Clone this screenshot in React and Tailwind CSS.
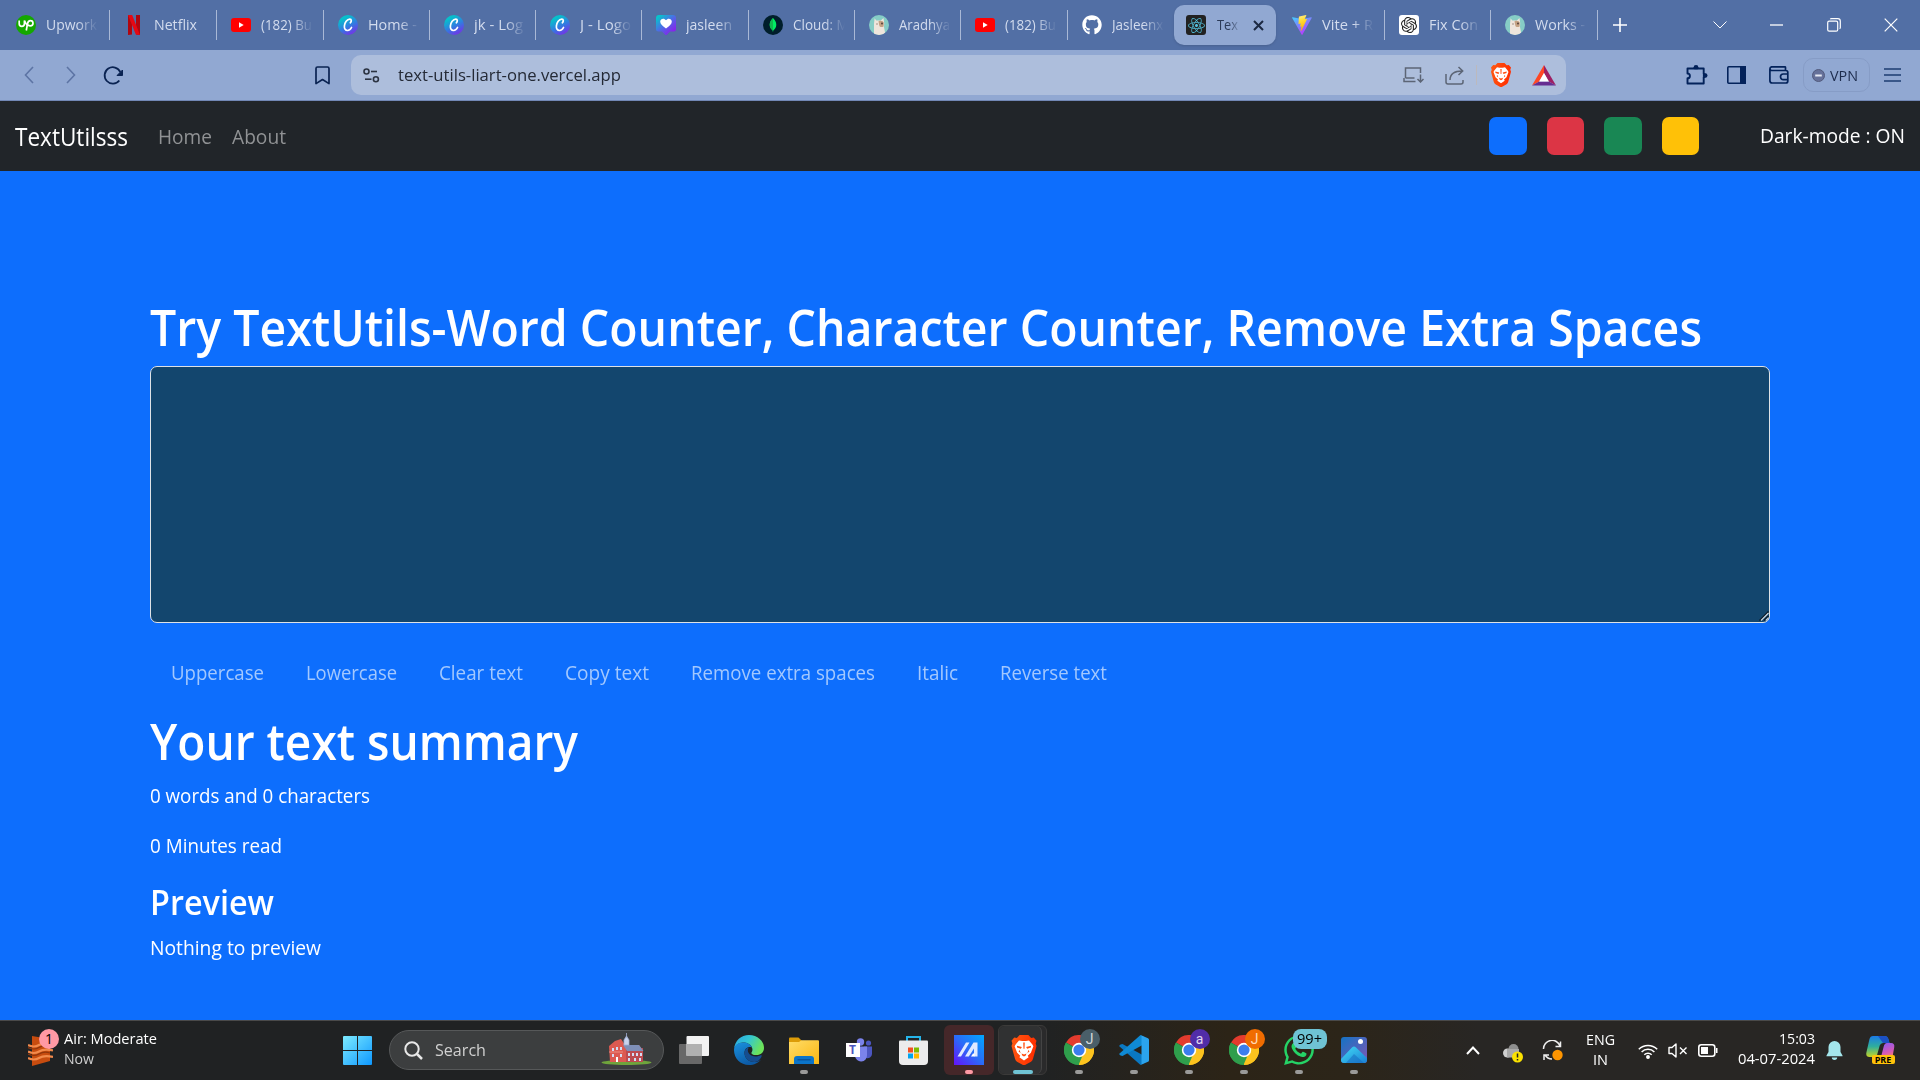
import React, { useLayoutEffect, useRef } from "react";
import { FaGithub, FaWhatsapp, FaReact } from "react-icons/fa";
import { SiOpenai } from "react-icons/si";

/* Single-line label set to a fixed advance width (w) or a fixed condensing factor (k). */
function T({ w, k, className = "", children }) {
  const outer = useRef(null);
  const inner = useRef(null);
  useLayoutEffect(() => {
    const el = inner.current;
    el.style.transform = "none";
    const natural = el.getBoundingClientRect().width;
    const scale = w ? w / natural : k || 0.93;
    el.style.transform = `scaleX(${scale})`;
    outer.current.style.width = `${natural * scale}px`;
  }, [w, k]);
  return (
    <span ref={outer} className={`inline-block whitespace-pre ${className}`}>
      <span ref={inner} className="inline-block origin-left">
        {children}
      </span>
    </span>
  );
}

const Canva = ({ id }) => (
  <svg width="20" height="20" viewBox="0 0 20 20">
    <defs>
      <linearGradient id={id} x1="0.2" y1="0" x2="0.75" y2="1">
        <stop offset="0.15" stopColor="#06c1cb" />
        <stop offset="0.55" stopColor="#2f7fe0" />
        <stop offset="1" stopColor="#7a2be8" />
      </linearGradient>
    </defs>
    <circle cx="10" cy="10" r="10" fill={`url(#${id})`} />
    <path d="M12.300 7.800c1.300-1.100 1.500-3.700-.5-3.700C9 4.100 6.700 7.700 6.400 10.800c-.3 3 1.100 4.800 3.100 4.700 1.700-.1 3.200-1.300 4-3" fill="none" stroke="#fff" strokeWidth="1.700" strokeLinecap="round" />
  </svg>
);

const YouTube = () => (
  <svg width="20" height="20" viewBox="0 0 20 20">
    <rect x="0" y="3" width="20" height="14" rx="3" fill="#f00" />
    <path d="M8 7.200 12.700 10 8 12.800z" fill="#fff" />
  </svg>
);

const Upwork = () => (
  <span className="flex h-5 w-5 items-center justify-center rounded-full bg-[#14a800]">
    <svg width="16" height="12" viewBox="0 0 16 12" fill="none" stroke="#fff" strokeWidth="1.700">
      <path d="M1.200 1.500v3.300a2.600 2.600 0 0 0 5.200 0V1.500C7.300 4 8.600 5.800 10 6.700" />
      <path d="M8.300 11.500 9.400 5.200C9.800 3 10.900 1.700 12.400 1.700a2.500 2.500 0 0 1 0 5.200c-1 0-1.900-.4-2.600-1" />
    </svg>
  </span>
);

const NetflixIcon = () => (
  <svg width="20" height="20" viewBox="0 0 20 20">
    <path d="M4 0h4v19.500L4 20zM12 0h4v20l-4-.5z" fill="#b1060f" />
    <path d="M4 0h4.200L16 20l-4.200-.5z" fill="#e50914" />
  </svg>
);

const HeartPin = () => (
  <svg width="20" height="20" viewBox="0 0 20 20">
    <defs>
      <linearGradient id="hp" x1="0" y1="0" x2="0.9" y2="1">
        <stop offset="0.1" stopColor="#06c5cc" />
        <stop offset="0.5" stopColor="#4d6be6" />
        <stop offset="0.9" stopColor="#8a20ec" />
      </linearGradient>
    </defs>
    <path d="M3 0h14a3 3 0 0 1 3 3v11a2.500 2.500 0 0 1-2.500 2.500H14L11 19.600a1.300 1.300 0 0 1-2 0L6 16.500H2.500A2.500 2.500 0 0 1 0 14V3a3 3 0 0 1 3-3z" fill="url(#hp)" />
    <path d="M10 13.500C6 10.800 4.200 9 4.200 6.600c0-3 4-4.200 5.800-1.300 1.800-2.900 5.800-1.700 5.800 1.300 0 2.400-1.800 4.200-5.800 6.900z" fill="#fff" />
  </svg>
);

const Mongo = () => (
  <svg width="20" height="20" viewBox="0 0 20 20">
    <circle cx="10" cy="10" r="10" fill="#001e2b" />
    <path d="M10 3c1.800 2 3.300 4 3.300 6.800 0 2.600-1.300 4.400-2.900 5.500L10 17l-.4-1.700C8 14.200 6.700 12.400 6.700 9.800 6.700 7 8.200 5 10 3z" fill="#00ed64" />
    <path d="M10 3v14l-.4-1.700C8 14.200 6.700 12.400 6.700 9.800 6.700 7 8.200 5 10 3z" fill="#10b850" />
  </svg>
);

const Llama = () => (
  <svg width="20" height="20" viewBox="0 0 20 20">
    <defs>
      <clipPath id="llc"><circle cx="10" cy="10" r="10" /></clipPath>
    </defs>
    <g clipPath="url(#llc)">
      <rect width="20" height="20" fill="#86cdc6" />
      <path d="M5 20V9l.6-5.800L7.300 5.500h4.500L14.500 3l.7 5-.2 4 1.500 8z" fill="#efe5dc" />
      <path d="M9.500 6.200c2-.8 5-.3 5.300 1.800l-.2 3.500c-2 1.200-4 .5-4.300-1z" fill="#c5a283" />
      <circle cx="13" cy="8.500" r=".9" fill="#4c3a35" />
      <circle cx="8" cy="9" r=".7" fill="#8b7468" />
    </g>
  </svg>
);

const ReactBadge = () => (
  <span className="flex h-5 w-5 items-center justify-center rounded-[3px] bg-[#222]">
    <FaReact size={17} color="#53c1de" />
  </span>
);

const Vite = () => (
  <svg width="20" height="20" viewBox="0 0 20 20">
    <defs>
      <linearGradient id="vt1" x1="0" y1="0" x2="0.6" y2="1">
        <stop stopColor="#41d1ff" />
        <stop offset="1" stopColor="#bd34fe" />
      </linearGradient>
      <linearGradient id="vt2" x1="0.4" y1="0" x2="0.6" y2="1">
        <stop stopColor="#ffea83" />
        <stop offset="0.3" stopColor="#ffdd35" />
        <stop offset="1" stopColor="#ffa800" />
      </linearGradient>
    </defs>
    <path d="m19.700 3.100-9.200 16.500a.5.500 0 0 1-.9 0L.2 3.100a.5.500 0 0 1 .5-.8l9.300 1.700 9.200-1.700c.4 0 .7.400.5.800z" fill="url(#vt1)" />
    <path d="m14 .1-6.800 1.300-.3.300-.4 7c0 .2.100.3.300.3l1.900-.4-.6 2.800c0 .2.100.4.300.3l1.200-.4-.9 4.400c0 .3.300.4.500.2l5.800-11.600c.1-.2-.1-.4-.3-.4l-2 .4L14.300.4c0-.2-.1-.3-.3-.3z" fill="url(#vt2)" />
  </svg>
);

const Gpt = () => (
  <span className="flex h-5 w-5 items-center justify-center rounded-[3px] bg-white">
    <SiOpenai size={16} color="#222" />
  </span>
);

const Brave = ({ size = 24, id }) => (
  <svg width={size} height={size} viewBox="0 0 24 24">
    <defs>
      <linearGradient id={id} x1="0" y1="0" x2="1" y2="0.2">
        <stop stopColor="#ff5a12" />
        <stop offset="1" stopColor="#ff2f00" />
      </linearGradient>
    </defs>
    <path d="M8.500 0h7l2.200 2.300 2.100-.3L22 4.600l-.7 2.200.7 2-2.800 10.200c-.3 1-.8 1.700-1.600 2.300L12.800 24h-1.600l-4.800-2.700c-.8-.6-1.300-1.300-1.600-2.300L2 8.800l.7-2L2 4.600 4.200 2l2.100.3z" fill={`url(#${id})`} />
    <path d="m8 4.300 2.500.5h3L16 4.300l2.700 3.200.8 1.500-2 5.200-2.500 2.300.7 1.300L12 20.300l-3.700-2.500.7-1.300-2.500-2.300L4.500 9l.8-1.500z" fill="#fff" />
    <path d="m6.300 8.600 4 .9-.8 1.500-3-1zM17.700 8.600l-4 .9.800 1.500 3-1zM10 14.800l2 .7 2-.7-.6 1.600-1.400.8-1.400-.8zM11.400 6h1.200l-.2 5h-.8zM8.500 12l.8 2.500-1.700-1.600zM15.500 12l-.8 2.500 1.700-1.600z" fill="#ff4a0c" />
  </svg>
);

const Bat = () => (
  <svg width="24" height="21" viewBox="0 0 24 21">
    <path d="M12 0 0 20.500l7.200-4L12 8z" fill="#ff4724" />
    <path d="m12 0 12 20.500-7.200-4L12 8z" fill="#9e1f63" />
    <path d="M0 20.500h24l-7.200-4H7.200z" fill="#662d91" />
    <path d="m12 8-4.900 8.500h9.800z" fill="#fff" />
  </svg>
);

const TABS = [
  { w: "w-[110px] pl-4", sep: true, icon: <Upwork />, text: "Upwork", tw: 51 },
  { w: "w-[107px] pl-3.5", sep: true, icon: <NetflixIcon />, text: "Netflix", tw: 43, solid: true },
  { w: "w-[107px] pl-3.5", sep: true, icon: <YouTube />, text: "(182) Bu", tw: 51 },
  { w: "w-[106px] pl-3.5", sep: true, icon: <Canva id="cv1" />, text: "Home -", tw: 49 },
  { w: "w-[106px] pl-3.5", sep: true, icon: <Canva id="cv2" />, text: "jk - Log", tw: 49 },
  { w: "w-[106px] pl-3.5", sep: true, icon: <Canva id="cv3" />, text: "J - Logo", tw: 51 },
  { w: "w-[107px] pl-3.5", sep: true, icon: <HeartPin />, text: "jasleen", tw: 46 },
  { w: "w-[106px] pl-3.5", sep: true, icon: <Mongo />, text: "Cloud: M" },
  { w: "w-[106px] pl-3.5", sep: true, icon: <Llama />, text: "Aradhya", tw: 51 },
  { w: "w-[107px] pl-3.5", sep: true, icon: <YouTube />, text: "(182) Bu", tw: 51 },
  { w: "w-[106px] pl-3.5", icon: <FaGithub size={20} color="#fff" />, text: "Jasleenx" },
  { active: true },
  { w: "w-[107px] pl-3.5", sep: true, icon: <Vite />, text: "Vite + R", tw: 51 },
  { w: "w-[106px] pl-3.5", sep: true, icon: <Gpt />, text: "Fix Con", tw: 49 },
  { w: "w-[107px] pl-3.5", sep: true, icon: <Llama />, text: "Works -", tw: 50 },
];

function TabStrip() {
  return (
    <div className="flex h-[50px] items-center bg-[#526fa5] text-[14.5px] text-[#d3dcee]">
      {TABS.map((t, i) =>
        t.active ? (
          <div key={i} className="mr-0.5 flex h-10 w-[102px] shrink-0 items-center rounded-[10px] bg-[#91a8d2] pl-3 shadow-sm">
            <ReactBadge />
            <div className="ml-[11px] w-[22px] overflow-hidden text-[#2b3a57] [mask-image:linear-gradient(to_right,black_50%,rgba(0,0,0,0.2))]">
              <T w={21}>Tex</T>
            </div>
            <svg className="ml-3.5" width="11" height="11" viewBox="0 0 11 11">
              <path d="M1 1l9 9M10 1l-9 9" stroke="#1c2942" strokeWidth="2" />
            </svg>
          </div>
        ) : (
          <div key={i} className={`flex h-[30px] shrink-0 items-center ${t.w} ${t.sep ? "border-r border-[#a9b8d6]" : ""}`}>
            <span className="shrink-0">{t.icon}</span>
            <div className={`ml-2.5 w-[52px] shrink-0 overflow-hidden ${t.solid ? "" : "[mask-image:linear-gradient(to_right,black_60%,transparent)]"}`}>
              <T w={t.tw}>{t.text}</T>
            </div>
          </div>
        )
      )}
      <svg className="ml-[15px]" width="14" height="14" viewBox="0 0 14 14"><path d="M7 0v14M0 7h14" stroke="#fff" strokeWidth="1.6" /></svg>
      <div className="ml-auto flex items-center">
        <div className="flex w-[57px] justify-center"><svg width="14" height="8" viewBox="0 0 14 8"><path d="m.5.5 6.500 6.500 6.500-6.500" fill="none" stroke="#fff" strokeWidth="1" /></svg></div>
        <div className="flex w-[57px] justify-center"><svg width="13" height="2" viewBox="0 0 13 2"><path d="M0 1h13" stroke="#fff" strokeWidth="1.300" /></svg></div>
        <div className="flex w-[57px] justify-center"><svg width="14" height="14" viewBox="0 0 14 14" fill="none" stroke="#fff" strokeWidth="1.200"><rect x=".7" y="3.200" width="10" height="10" rx="1.500" /><path d="M3.300 1.300Q3.600.7 4.500.7h6.300q2.500 0 2.500 2.500v6.300q0 .8-.7 1.200" /></svg></div>
        <div className="flex w-[58px] justify-center"><svg width="14" height="14" viewBox="0 0 14 14"><path d="m.7.7 12.600 12.600M13.300.7.7 13.300" stroke="#fff" strokeWidth="1.200" /></svg></div>
      </div>
    </div>
  );
}

function Toolbar() {
  const slot = "flex w-[42px] shrink-0 justify-center";
  return (
    <div className="flex h-[51px] items-center border-b border-[#7288b5] bg-[#91a8d2] pl-2">
      <div className={slot}><svg width="10" height="18" viewBox="0 0 10 18"><path d="M9 1 1.500 9 9 17" fill="none" stroke="#5d74a4" strokeWidth="1.600" /></svg></div>
      <div className={slot}><svg width="10" height="18" viewBox="0 0 10 18"><path d="m1 1 7.500 8L1 17" fill="none" stroke="#5d74a4" strokeWidth="1.600" /></svg></div>
      <div className={slot}>
        <svg width="20" height="20" viewBox="0 0 20 20" fill="none">
          <path d="M16.300 15.500A8.200 8.200 0 1 1 17.300 7" stroke="#0a2352" strokeWidth="1.800" />
          <path d="M19.500 5v5.500h-5.500z" fill="#0a2352" stroke="#0a2352" strokeLinejoin="round" />
        </svg>
      </div>
      <div className="ml-[168px] flex w-10 justify-center"><svg width="15" height="19" viewBox="0 0 15 19"><path d="M1 2.500Q1 1 2.500 1h10Q14 1 14 2.500V17.600L7.500 13.500 1 17.600z" fill="none" stroke="#0a2352" strokeWidth="1.700" strokeLinejoin="round" /></svg></div>
      <div className="ml-[9px] flex h-10 w-[1215px] items-center rounded-[10px] bg-[#adbedc] pl-3 pr-px">
        <svg width="17" height="15" viewBox="0 0 17 15" fill="none" stroke="#2b3342" strokeWidth="1.600">
          <circle cx="3.500" cy="3.500" r="2.500" /><path d="M8 3.500h6" /><circle cx="12.900" cy="11.200" r="2.500" /><path d="M2 11.200h6.500" />
        </svg>
        <div className="ml-[18px] pb-px text-[17px] text-[#242a36]"><T w={223}>text-utils-liart-one.vercel.app</T></div>
        <div className="ml-auto flex items-center">
          <div className={slot}>
            <svg width="21" height="16" viewBox="0 0 21 16" fill="none" stroke="#5c6575" strokeWidth="1.500">
              <path d="M2.500 11V1h15v5M2.500 11h9M1 11v3.500h11.500M17.500 7.500v7M14.500 12l3 3 3-3" />
            </svg>
          </div>
          <div className="flex w-[42px] justify-center">
            <svg width="20" height="19" viewBox="0 0 20 19" fill="none" stroke="#5c6575" strokeWidth="1.500">
              <path d="M1 8v8q0 2 2 2h13q2 0 2-2v-2M5 14C5 8.500 9 5 17.500 5M13.500 1l4.200 4-4.200 4" />
            </svg>
          </div>
          <div className="h-5 w-px bg-[#bcb9bd]" />
          <div className="flex w-[46px] justify-center pl-0.5"><Brave size={24} id="br1" /></div>
          <div className="flex w-[42px] justify-center"><Bat /></div>
        </div>
      </div>
      <div className="ml-[109px] flex w-[42px] justify-center pb-px pl-0.5">
        <svg width="22" height="20" viewBox="0 0 22 20">
          <path d="M1.500 3.500h6.800V3h3.400v.5h6V9h.8v3h-.8v6.500H1.500v-5.200c3.200 0 3.200-4.800 0-4.800z" fill="none" stroke="#03225a" strokeWidth="1.900" strokeLinejoin="round" />
          <circle cx="10" cy="2.400" r="2.400" fill="#03225a" /><circle cx="19.200" cy="10.500" r="2.300" fill="#03225a" />
        </svg>
      </div>
      <div className="flex w-10 justify-center pr-0.5"><svg width="19" height="18" viewBox="0 0 19 18"><rect x=".8" y=".8" width="17.400" height="16.400" rx="1" fill="none" stroke="#03225a" strokeWidth="1.600" /><path d="M13 0h6v18h-6z" fill="#03225a" /></svg></div>
      <div className="ml-px flex w-[42px] justify-center">
        <svg width="20" height="18" viewBox="0 0 20 18" fill="none" stroke="#03225a" strokeWidth="1.700">
          <path d="M16.500 4.500V1.500q0-.7-.7-.7H3Q.9.8.9 3v11.500q0 2.500 2.300 2.500h13.600q2 0 2-2V6.500q0-2-2-2H3Q.9 4.500.9 2.800M18.800 8h-4.500a2.800 2.800 0 0 0 0 5.600h4.500" />
        </svg>
      </div>
      <div className="ml-[3px] flex h-[34px] w-[67px] items-center rounded-[10px] border border-[#869cc6] pl-2 text-[15px] text-[#1c2b4c]">
        <svg width="13" height="13" viewBox="0 0 13 13"><circle cx="6.500" cy="6.500" r="6" fill="#66719a" stroke="#525a7c" /><path d="M3.200 6.500h6.600" stroke="#e6eaf4" strokeWidth="2" /></svg>
        <T w={28} className="ml-[5px]">VPN</T>
      </div>
      <div className="flex w-[46px] justify-center pr-0.5"><svg width="17" height="14" viewBox="0 0 17 14"><path d="M0 1h17M0 7h17M0 13h17" stroke="#1d3c72" strokeWidth="1.700" /></svg></div>
    </div>
  );
}

function Navbar() {
  return (
    <nav className="flex h-[70px] items-center bg-[#212529] px-[15px] text-[20px] text-white">
      <T w={113} className="pt-px text-[25px]">TextUtilsss</T>
      <T w={54} className="ml-[30px] pt-0.5 text-[#909294]">Home</T>
      <T w={54} className="ml-5 pt-0.5 text-[#909294]">About</T>
      <div className="ml-auto flex gap-5">
        <div className="h-[38px] w-[37.5px] rounded-[7px] bg-[#0d6efd]" />
        <div className="h-[38px] w-[37.5px] rounded-[7px] bg-[#dc3545]" />
        <div className="h-[38px] w-[37.5px] rounded-[7px] bg-[#198754]" />
        <div className="h-[38px] w-[37.5px] rounded-[7px] bg-[#ffc107]" />
      </div>
      <T w={145} className="ml-[61px]">Dark-mode : ON</T>
    </nav>
  );
}

function Main() {
  return (
    <main className="flex h-[849px] flex-col bg-[#0d6efd] px-[150px] pt-[126px] text-[20px] leading-[30px] text-white">
      <h1 className="h-[60px] text-[50px] leading-[60px] font-semibold"><T w={1552}>Try TextUtils-Word Counter, Character Counter, Remove Extra Spaces</T></h1>
      <div className="relative mt-[9px] h-[257px] w-[1620px] shrink-0">
        <textarea className="block h-full w-full resize-none rounded-[7px] border border-[#dee2e6] bg-[#13466e] outline-none" />
        <svg className="absolute right-px bottom-0.5" width="11" height="11" viewBox="0 0 11 11" strokeWidth="1.300">
          <path d="M1.500 10.500 10.500 1.500M6 10.500 10.500 6" stroke="#0a1520" /><path d="M3 10.500 10.500 3M7.800 10.500 10.500 7.800" stroke="#c5d0da" />
        </svg>
      </div>
      <div className="mt-[35px] flex h-[30px] gap-[42px] pl-[21px] text-[#a3c8fe]">
        <T w={93}>Uppercase</T>
        <T w={91}>Lowercase</T>
        <T w={84}>Clear text</T>
        <T w={84}>Copy text</T>
        <T w={184}>Remove extra spaces</T>
        <T w={41}>Italic</T>
        <T w={107}>Reverse text</T>
      </div>
      <h1 className="mt-[23px] h-[60px] text-[50px] leading-[60px] font-semibold"><T w={428}>Your text summary</T></h1>
      <p className="mt-2.5 h-[30px]"><T w={220}>0 words and 0 characters</T></p>
      <p className="mt-5 h-[30px]"><T w={132}>0 Minutes read</T></p>
      <h2 className="mt-5 h-[42px] text-[35px] leading-[42px] font-semibold"><T w={124}>Preview</T></h2>
      <p className="mt-2.5 h-[30px]"><T w={171}>Nothing to preview</T></p>
    </main>
  );
}

const Building = () => (
  <svg width="51" height="32" viewBox="0 0 51 32">
    <ellipse cx="25.500" cy="29.500" rx="25" ry="2.500" fill="#6fa43c" />
    <path d="M8 13 14 8l6-2 4 6h14l4 6v11H9z" fill="#dc5a52" />
    <path d="M25 15h17v14H25z" fill="#bd4a50" />
    <path d="M22 12h16l4.500 6H26z" fill="#7e8fb8" />
    <path d="M25.500 0v5M23 12V7l2.500-4L28 7v5z" fill="#c9d3ee" stroke="#a3b0d4" strokeWidth=".8" />
    <path d="M11 15h2v3h-2zM15 14h2v3h-2zM19 14h2v3h-2zM11 21h2v3h-2zM19 21h2v3h-2zM27 20h2v3h-2zM31 20h2v3h-2zM35 20h2v3h-2zM39 20h2v3h-2zM27 25h2v3h-2zM33 25h2v3h-2zM38 25h2v3h-2z" fill="#d3dcf4" />
    <path d="M15 24h2v5h-2z" fill="#fff" />
    <path d="M8 19h14" stroke="#f19a8d" strokeWidth=".8" />
  </svg>
);

const Chrome = () => (
  <svg width="30" height="30" viewBox="0 0 30 30">
    <path d="M15 15 2 7.500A15 15 0 0 1 28 7.500z" fill="#e33b2e" />
    <path d="M15 15 28 7.500A15 15 0 0 1 15 30z" fill="#fcc31e" />
    <path d="M15 15V30A15 15 0 0 1 2 7.500z" fill="#2f9e4c" />
    <path d="M15 8h13.300A15 15 0 0 1 15 30l6.300-11.500z" fill="#fcc31e" />
    <path d="M2 7.500 8.700 18.700 15 22l3.200-.5L14.500 30A15 15 0 0 1 2 7.500z" fill="#2f9e4c" />
    <circle cx="15" cy="15" r="7.200" fill="#fff" /><circle cx="15" cy="15" r="5.600" fill="#3b7ded" />
  </svg>
);

const ChromeProfile = ({ bg, letter }) => (
  <span className="relative">
    <Chrome />
    <span className={`absolute -top-1.5 left-4 flex size-5 items-center justify-center rounded-full font-[Roboto,sans-serif] text-[14px] leading-none ${bg}`}>{letter}</span>
  </span>
);

const Edge = () => (
  <svg width="30" height="30" viewBox="0 0 30 30">
    <defs>
      <linearGradient id="ed1" x1="0" y1="0" x2="1" y2="0.4"><stop stopColor="#2aa5e4" /><stop offset=".5" stopColor="#33c6d3" /><stop offset="1" stopColor="#6ce35a" /></linearGradient>
      <linearGradient id="ed2" x1="0" y1="0" x2="0.5" y2="1"><stop stopColor="#1a92df" /><stop offset="1" stopColor="#0c59a4" /></linearGradient>
    </defs>
    <path d="M0 14C1 5.500 7 0 15 0c8.500 0 15 6 15 13 0 4.500-3.500 7-7.500 7-3.500 0-5.500-1.200-5-2.600.7-1.200 1.200-2 .8-4C17.500 9.500 13 7.500 9 7.500c-4.500 0-8 3-9 6.500z" fill="url(#ed1)" />
    <path d="M0 15c0-4.500 4-7.500 9-7.500 4.500 0 8 2 9 5-4-1.500-7.500 1-7.500 5.500 0 5 4.500 9.500 10.500 9 2.500-.2 4.500-1.200 6-2.500C24.500 28 20 30 15 30 6.500 30 0 23.500 0 15z" fill="url(#ed2)" />
    <path d="M10.500 18c0-3 1.500-5.200 4.500-5.500-1.500 1.500-1.700 4 .1 6.300 2.700 3.200 8.400 3.500 11.900 1.200 1 0 .8 1.500 0 2.700-1.500 2.300-3.500 4-6 4.300-6 .5-10.500-4-10.500-9z" fill="#154d8f" />
  </svg>
);

const Explorer = () => (
  <svg width="30" height="27" viewBox="0 0 30 27">
    <defs><linearGradient id="ex" x1="0" y1="0" x2="1" y2="1"><stop stopColor="#ffdc68" /><stop offset="1" stopColor="#fab711" /></linearGradient></defs>
    <path d="M0 1.500Q0 .5 1 .5h8.500L13 4v5H0z" fill="#dc9c08" />
    <path d="M0 5h10l2.500-1.800H29q1 0 1 1V27H0z" fill="url(#ex)" />
    <path d="M5 27v-5q0-3 3-3h14q3 0 3 3v5z" fill="#0b74c8" /><path d="M8.500 22.800h13" stroke="#084e93" strokeWidth="1.200" />
  </svg>
);

const Teams = () => (
  <span className="relative mt-[-1px]">
    <svg width="26" height="24" viewBox="0 0 26 24">
      <circle cx="22.500" cy="5" r="2.600" fill="#4c56c0" /><path d="M18 8.500h8V16a4.500 4.500 0 0 1-6 4z" fill="#4c56c0" />
      <circle cx="14.500" cy="4" r="3.700" fill="#7b83eb" /><path d="M9 8.500h12V17a6 6 0 0 1-12 1z" fill="#7b83eb" />
      <path d="M0 5h14v14H0z" fill="#fff" />
    </svg>
    <span className="absolute top-[5px] left-0 w-3.5 text-center text-[12px] leading-[14px] font-bold text-[#4c56c0]">T</span>
  </span>
);

const Store = () => (
  <svg width="29" height="29" viewBox="0 0 29 29">
    <path d="M8 7V1h13v6" fill="none" stroke="#25b5ea" strokeWidth="2" />
    <path d="M0 5.500Q0 4.500 1 4.500h27q1 0 1 1V25q0 4-4 4H4q-4 0-4-4z" fill="#ececec" />
    <path d="M9 11.500h5v5H9z" fill="#f25022" /><path d="M15 11.500h5v5h-5z" fill="#7fba00" />
    <path d="M9 17.500h5v5H9z" fill="#00a4ef" /><path d="M15 17.500h5v5h-5z" fill="#ffb900" />
  </svg>
);

const Armoury = () => (
  <svg width="30" height="30" viewBox="0 0 30 30">
    <defs><linearGradient id="ar" x1="0" y1="1" x2="1" y2="0"><stop stopColor="#6512fa" /><stop offset=".5" stopColor="#2a6bf8" /><stop offset="1" stopColor="#00a8ff" /></linearGradient></defs>
    <path d="M0 0h30v30H0z" fill="url(#ar)" />
    <path d="M3.500 21.500 12 7.500h3.500L7 21.500zM11 21.500l8.500-14h4v14H20v-8l-5.200 8z" fill="#dfe9ff" />
    <path d="M17 21.500l2-3h1.500v3z" fill="#fff" />
  </svg>
);

const VSCode = () => (
  <svg width="30" height="30" viewBox="0 0 30 30">
    <path d="M1.500 9.500 0 11l21.500 19 3-1.500v-8L3.500 9z" fill="#0a78c2" />
    <path d="M1.500 20.500 0 19 21.500 0l3 1.500v8L3.500 21z" fill="#0f8ad4" />
    <path d="M21.500 0 29 3.300q1 .5 1 1.500v20.400q0 1-1 1.500L21.500 30q1 0 1-1.200V1.200Q22.500 0 21.500 0z" fill="#2ba4ee" />
  </svg>
);

const Photos = () => (
  <svg width="26" height="26" viewBox="0 0 26 26">
    <defs>
      <linearGradient id="ph1" x1="0" y1="0" x2="1" y2="1"><stop stopColor="#1473c4" /><stop offset="1" stopColor="#7f57b5" /></linearGradient>
      <linearGradient id="ph2" x1="0" y1="0" x2="1" y2="1"><stop stopColor="#42dcf5" /><stop offset="1" stopColor="#1a80d6" /></linearGradient>
      <clipPath id="phc"><rect width="26" height="26" rx="3" /></clipPath>
    </defs>
    <g clipPath="url(#phc)">
      <path d="M0 0h26v26H0z" fill="url(#ph1)" />
      <path d="M0 22 11 10.500q2-2 4 0L26 21v5H0z" fill="url(#ph2)" />
      <path d="m5 26 8-9 10 9z" fill="#1565bd" opacity=".5" />
      <circle cx="19.500" cy="4.500" r="2.500" fill="#fff" />
    </g>
  </svg>
);

function TaskItem({ children, bar, bg = "" }) {
  return (
    <div className="relative flex h-[60px] w-[55px] shrink-0 items-center justify-center">
      <div className={`flex h-[50px] w-[50px] items-center justify-center rounded-[6px] ${bg}`}>{children}</div>
      {bar && <span className={`absolute bottom-1.5 left-1/2 h-1 -translate-x-1/2 rounded-full ${bar}`} />}
    </div>
  );
}

function Taskbar() {
  const idle = "w-2 bg-[#9a9a99]";
  return (
    <footer className="flex h-[60px] items-center border-t border-[#4a4a4a] bg-[linear-gradient(to_right,#202223_0,#202223_54%,#2c2417_64%,#2c2519_70%,#282624_77%,#282624_100%)] text-[14.5px] leading-5 text-white">
      <div className="flex w-[343px] items-center pl-7">
        <div className="relative">
          <svg width="25" height="30" viewBox="0 0 25 30">
            <path d="M4 0l18 3v22L4 30z" fill="#c74c0f" />
            <path d="M0 9q6 3 11 0t14-1M0 15.500q6 3 11 0t14-1M0 22q6 3 11 0t14-1" fill="none" stroke="#f28a4b" strokeWidth="2.200" />
            <path d="M0 11.500q6 3 11 0t11-1M0 18q6 3 11 0t11-1" fill="none" stroke="#8f350c" strokeWidth="1.200" />
          </svg>
          <span className="absolute -top-[7px] left-[11px] flex size-5 items-center justify-center rounded-full bg-[#ff99a4] text-[14px] text-black">1</span>
        </div>
        <div className="ml-[11px] flex flex-col pb-[3px]">
          <T w={93}>Air: Moderate</T>
          <T w={30} className="text-[#cfcfcf]">Now</T>
        </div>
      </div>
      <svg width="29" height="29" viewBox="0 0 29 29">
        <defs><linearGradient id="wn" gradientUnits="userSpaceOnUse" x1="0" y1="0" x2="29" y2="29"><stop stopColor="#7debff" /><stop offset="1" stopColor="#0e98ff" /></linearGradient></defs>
        <path d="M1 0h13v14H0V1q0-1 1-1zM15 0h13q1 0 1 1v13H15zM0 15h14v14H1q-1 0-1-1zM15 15h14v13q0 1-1 1H15z" fill="url(#wn)" />
      </svg>
      <div className="mt-[-1px] ml-[17px] flex h-10 w-[275px] items-center rounded-full border border-[#565859] bg-[#3c3e3f] pl-3.5">
        <svg width="19" height="19" viewBox="0 0 19 19" fill="none" stroke="#e8e8e8" strokeWidth="2"><circle cx="8" cy="8" r="6.700" /><path d="m13 13 5 5" strokeWidth="2.500" /></svg>
        <T w={51} className="ml-3 text-[17px] text-[#d0d0d0]">Search</T>
        <span className="mt-[-2px] ml-auto mr-[11px]"><Building /></span>
      </div>
      <div className="mt-[-1px] ml-[2px] flex">
        <TaskItem>
          <svg width="30" height="28" viewBox="0 0 30 28">
            <rect y="8" width="23" height="20" rx="1" fill="#686868" /><rect x="7.500" y="0" width="22.500" height="20" rx="1" fill="#f2f2f2" /><path d="M7.500 8H23v12H7.500z" fill="#b0b0b0" />
          </svg>
        </TaskItem>
        <TaskItem><Edge /></TaskItem>
        <TaskItem bar={idle}><Explorer /></TaskItem>
        <TaskItem><Teams /></TaskItem>
        <TaskItem><Store /></TaskItem>
        <TaskItem bar="w-2 bg-[#ff99a4]" bg="bg-[#452729]"><Armoury /></TaskItem>
        <div className="relative flex h-[60px] w-[55px] shrink-0 items-center pl-[2px]">
          <div className="flex h-[50px] w-[49px] rounded-[6px] border border-[#3b3a39] bg-[#2a2a2b]">
            <div className="flex h-full w-[43px] items-center justify-center rounded-[6px] border-r border-[#444] bg-[#303132] pl-[7px]"><Brave size={30} id="br2" /></div>
          </div>
          <span className="absolute bottom-1.5 left-[17px] h-1 w-5 rounded-full bg-[#6fc3d4]" />
        </div>
        <TaskItem bar={idle}><ChromeProfile bg="bg-[#4a5f69] text-[#d5dadc]" letter="J" /></TaskItem>
        <TaskItem bar={idle}><VSCode /></TaskItem>
        <TaskItem bar={idle}><ChromeProfile bg="bg-[#512da8] text-[#e0d8f0]" letter="a" /></TaskItem>
        <TaskItem bar={idle}><ChromeProfile bg="bg-[#f06c00] text-[#ffd9b8]" letter="J" /></TaskItem>
        <TaskItem bar={idle}>
          <span className="relative">
            <FaWhatsapp size={34} color="#25d366" />
            <span className="absolute -top-[4px] left-[11px] flex h-5 w-[34px] items-center justify-center rounded-[8px] bg-[#6fc3d4] text-[14.5px] text-black"><T w={25}>99+</T></span>
          </span>
        </TaskItem>
        <TaskItem bar={idle}><Photos /></TaskItem>
      </div>
      <div className="ml-[71px] flex w-[41px] justify-center"><svg width="14" height="9" viewBox="0 0 14 9"><path d="m1 8 6-6.500L13 8" fill="none" stroke="#fff" strokeWidth="2" /></svg></div>
      <div className="flex w-10 justify-center pt-1.5">
        <svg width="20" height="20" viewBox="0 0 20 20">
          <circle cx="10.500" cy="5" r="5" fill="#8e8e8e" /><circle cx="4.500" cy="9" r="4.500" fill="#d0d0d0" /><path d="M4 5h12v8.500H4z" fill="#a9a9a9" />
          <circle cx="14.500" cy="13" r="5.500" fill="#fbe200" /><path d="M14.500 9.500v4M14.500 15v1.500" stroke="#222" strokeWidth="1.500" />
        </svg>
      </div>
      <div className="flex w-[39px] justify-center">
        <svg width="21" height="21" viewBox="0 0 21 21" fill="none" stroke="#eee" strokeWidth="1.500">
          <path d="M1.500 9A8.500 8.500 0 0 1 18 6M18.500 1.500V6.500H13.500M10 19A8.500 8.500 0 0 1 3 15M2 20v-5h5" /><circle cx="15.500" cy="15" r="5.200" fill="#ff9500" stroke="none" />
        </svg>
      </div>
      <div className="flex w-14 flex-col items-center pb-px"><T w={29}>ENG</T><T w={15}>IN</T></div>
      <div className="flex w-[38px] justify-center pl-px">
        <svg width="20" height="16" viewBox="0 0 20 16" fill="none" stroke="#fff" strokeWidth="1.500"><path d="M.8 6.200a13 13 0 0 1 18.400 0M3.600 9a9 9 0 0 1 12.800 0M6.300 11.800a5.200 5.200 0 0 1 7.400 0" /><circle cx="10" cy="14" r="1.200" fill="#fff" /></svg>
      </div>
      <div className="flex w-[23px] justify-center">
        <svg width="20" height="15" viewBox="0 0 20 15" fill="none" stroke="#fff" strokeWidth="1.400"><path d="M8 1v13L4 10.500H1v-6h3zM12 4.500l6.500 6.500M18.500 4.500 12 11" strokeLinejoin="round" /></svg>
      </div>
      <div className="flex w-[36px] justify-center pl-px">
        <svg width="20" height="13" viewBox="0 0 20 13"><rect x=".8" y=".8" width="16" height="11.400" rx="2.500" fill="none" stroke="#fff" strokeWidth="1.600" /><path d="M3 3h7v7H3zM18 4h1.500v5H18z" fill="#fff" /></svg>
      </div>
      <div className="flex w-[90px] flex-col items-end pb-[3px]"><T w={36}>15:03</T><T w={77}>04-07-2024</T></div>
      <div className="ml-[3px] flex w-8 justify-center">
        <svg width="17" height="19" viewBox="0 0 17 19"><path d="M8.500 0a6 6 0 0 1 6 6v5l2 3.500v.8H.5v-.8l2-3.500V6a6 6 0 0 1 6-6zM5.800 16.500h5.400a2.700 2.500 0 0 1-5.400 0z" fill="#a4e6ec" /></svg>
      </div>
      <div className="flex w-[60px] justify-center">
        <span className="relative -mt-0.5">
          <svg width="29" height="28" viewBox="0 0 29 28">
            <defs>
              <linearGradient id="cp1" x1="0" y1="0" x2="0" y2="1"><stop stopColor="#1a7be8" /><stop offset=".5" stopColor="#2fae9c" /><stop offset="1" stopColor="#c6d423" /></linearGradient>
              <linearGradient id="cp2" x1="0.3" y1="0" x2="0.6" y2="1"><stop stopColor="#8f5af0" /><stop offset=".6" stopColor="#d659b5" /><stop offset="1" stopColor="#ff8a55" /></linearGradient>
            </defs>
            <path d="M7 0h12q2.500 0 3.200 2.500L23.500 7H17q-2.500 0-3.300 2.500L10.500 21H3.500Q-.5 21 .4 16.500L3.500 3Q4.300 0 7 0z" fill="url(#cp1)" />
            <path d="M12 0h7q2.500 0 3.200 2.500L23.500 7H17z" fill="#1b50c4" />
            <path d="M17 7h8q4 0 3.200 4.500L26.500 21q-.5 2-3 2h-9l3.200-12.500Q18.500 7 21 7z" fill="url(#cp2)" />
          </svg>
          <span className="absolute top-[19px] left-[6px] flex h-[9px] w-[23px] items-center justify-center rounded-[2px] bg-[#ffc20a] text-[9px] leading-none font-bold text-black">PRE</span>
        </span>
      </div>
    </footer>
  );
}

export default function App() {
  return (
    <div className="flex h-[1080px] w-[1920px] flex-col overflow-hidden font-['Open_Sans','Noto_Sans',sans-serif]">
      <TabStrip />
      <Toolbar />
      <Navbar />
      <Main />
      <Taskbar />
    </div>
  );
}
